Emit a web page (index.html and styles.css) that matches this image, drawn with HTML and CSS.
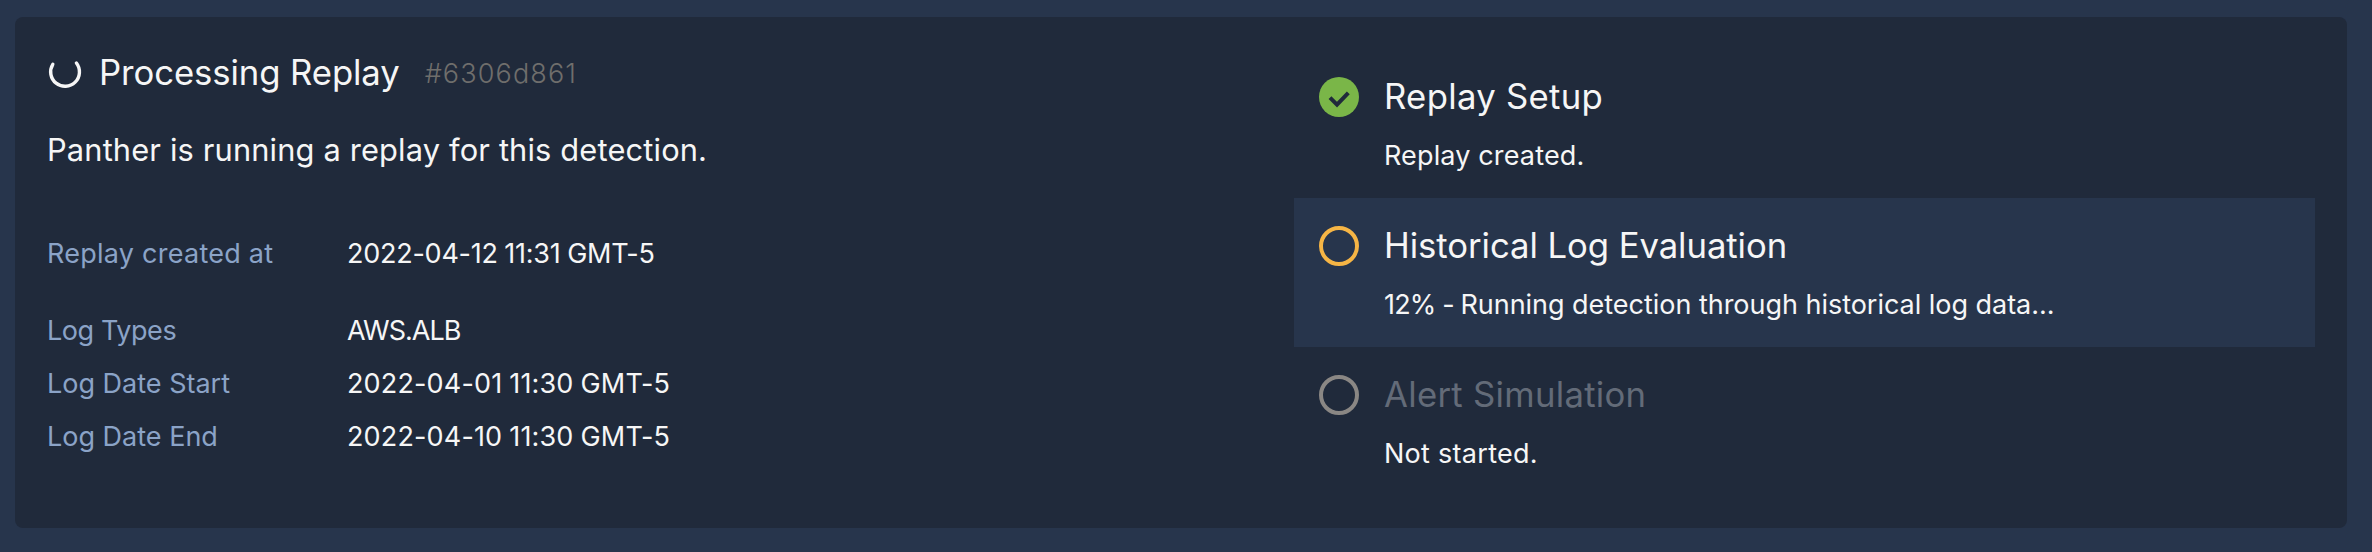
FILE: index.html
```html
<!DOCTYPE html>
<html lang="en">
<head>
<meta charset="utf-8">
<title>Processing Replay</title>
<link rel="stylesheet" href="styles.css">
</head>
<body>
<main class="card">
  <section class="summary">
    <header class="heading">
      <svg class="spinner" viewBox="0 0 36 36" aria-hidden="true"><path d="M5.8 10.3A14.4 14.4 0 1 0 29.4 9"/></svg>
      <h1 class="title">Processing Replay</h1>
      <span class="replay-id">#6306d861</span>
    </header>
    <p class="lead">Panther is running a replay for this detection.</p>
    <dl class="facts">
      <div class="fact fact--created"><dt class="key key--wide">Replay created at</dt><dd class="value value--tight">2022-04-12 11:31 GMT-5</dd></div>
      <div class="fact"><dt class="key key--tight">Log Types</dt><dd class="value value--caps">AWS.ALB</dd></div>
      <div class="fact"><dt class="key">Log Date Start</dt><dd class="value">2022-04-01 11:30 GMT-5</dd></div>
      <div class="fact"><dt class="key">Log Date End</dt><dd class="value">2022-04-10 11:30 GMT-5</dd></div>
    </dl>
  </section>
  <ol class="steps">
    <li class="step step--done">
      <svg class="icon" viewBox="0 0 40 40" aria-hidden="true"><circle class="disc" cx="20" cy="20" r="20"/><path class="tick" d="M11 20.7L18 27.6L29.3 15.9"/></svg>
      <div class="step-body"><h2 class="step-title">Replay Setup</h2><p class="step-text">Replay created.</p></div>
    </li>
    <li class="step step--active">
      <svg class="icon" viewBox="0 0 40 40" aria-hidden="true"><circle class="ring" cx="20" cy="20" r="18"/></svg>
      <div class="step-body"><h2 class="step-title">Historical Log Evaluation</h2><p class="step-text"><span class="percent">12% - </span>Running detection through historical log data...</p></div>
    </li>
    <li class="step step--pending">
      <svg class="icon" viewBox="0 0 40 40" aria-hidden="true"><circle class="ring" cx="20" cy="20" r="18"/></svg>
      <div class="step-body"><h2 class="step-title">Alert Simulation</h2><p class="step-text">Not started.</p></div>
    </li>
  </ol>
</main>
</body>
</html>
```

FILE: styles.css
```css
* { box-sizing: border-box; margin: 0; padding: 0; }
body {
  height: 552px;
  padding: 17px 25px 24px 15px;
  background: #27354c;
  color: #f6f6f6;
  font-family: Inter, "Liberation Sans", sans-serif;
  font-size: 27px;
  font-weight: 400;
  overflow: hidden;
}
.card {
  display: grid;
  grid-template-columns: 1fr 1021px;
  height: 511px;
  padding: 32px;
  border-radius: 8px;
  background: #202a3b;
}
.heading { display: flex; align-items: center; height: 46px; }
.spinner { width: 36px; height: 36px; margin-right: 16px; fill: none; stroke: #f6f6f6; stroke-width: 3.4; stroke-linecap: round; }
.title { font-size: 34.7px; line-height: 46px; font-weight: 400; letter-spacing: -0.09px; }
.replay-id { margin-left: 25px; padding-top: 4px; line-height: 36px; font-weight: 300; letter-spacing: 1.13px; color: #6f6e6c; }
.lead { margin-top: 34px; font-size: 30.8px; line-height: 42px; letter-spacing: 0.16px; }
.facts { margin-top: 56px; }
.fact { display: flex; line-height: 53px; }
.fact--created { margin-bottom: 24px; }
.key { width: 300px; color: #8ba3c7; }
.key--wide { letter-spacing: 0.25px; }
.key--tight { letter-spacing: -0.42px; }
.value { letter-spacing: 0.15px; word-spacing: -0.7px; }
.value--tight { letter-spacing: -0.25px; }
.value--caps { letter-spacing: -1px; }
.steps { list-style: none; }
.step { display: flex; gap: 25px; height: 149px; padding: 28px 25px 0; }
.step--active { background: #27354c; }
.icon { flex: none; width: 40px; height: 40px; fill: none; }
.disc { fill: #7ab648; }
.tick { stroke: #202a3b; stroke-width: 4; }
.ring { stroke: #8a8784; stroke-width: 4; }
.step--active .ring { stroke: #f6b545; }
.step-title { font-size: 34.7px; line-height: 38px; font-weight: 400; letter-spacing: 0.3px; }
.step--active .step-title { letter-spacing: -0.06px; }
.step--pending .step-title { color: #636b78; letter-spacing: 0.29px; }
.step-text { margin-top: 23px; line-height: 36px; letter-spacing: 0.14px; }
.step--active .step-text { letter-spacing: -0.03px; }
.percent { letter-spacing: -0.85px; }
.step--pending .step-text { letter-spacing: 0.28px; }
```
